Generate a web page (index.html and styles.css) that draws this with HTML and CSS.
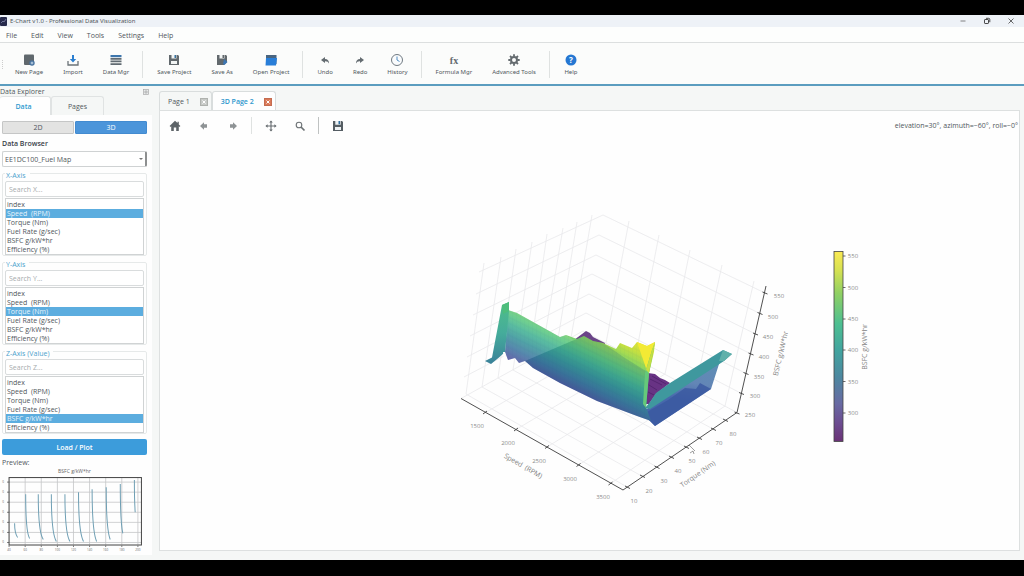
FILE: index.html
```html
<!DOCTYPE html>
<html lang="en">
<head>
<meta charset="utf-8">
<title>E-Chart v1.0 - Professional Data Visualization</title>
<link rel="stylesheet" href="styles.css">
</head>
<body>
<div class="window">
  <header class="titlebar">
    <svg class="app-icon" viewBox="0 0 8 9"><rect width="7" height="9" rx="1" fill="#262a4c"/><path d="M1 6l2-2 1 1 2-3" fill="none" stroke="#8d92b8" stroke-width=".7"/></svg>
    <h1 class="title">E-Chart v1.0 - Professional Data Visualization</h1>
    <div class="window-controls">
      <button aria-label="Minimize"><svg viewBox="0 0 8 8"><path d="M1.5 4h5" stroke="#666" stroke-width=".8"/></svg></button>
      <button aria-label="Restore"><svg viewBox="0 0 8 8" fill="none" stroke="#333" stroke-width=".9"><rect x="1.5" y="2.5" width="4" height="4" rx=".6"/><path d="M3 1.3h2.6q1.2 0 1.2 1.2v2.7"/></svg></button>
      <button aria-label="Close"><svg viewBox="0 0 8 8"><path d="M1.5 1.5l5 5m0-5l-5 5" stroke="#444" stroke-width=".8"/></svg></button>
    </div>
  </header>
  <nav class="menubar">
    <button>File</button><button>Edit</button><button>View</button><button>Tools</button><button>Settings</button><button>Help</button>
  </nav>
  <div class="toolbar">
    <span class="grip"></span>
    <button class="tool"><svg viewBox="0 0 14 14"><path d="M3 1.5h8q1 0 1 1V8l-4 4H3q-1 0-1-1V2.500q0-1 1-1z" fill="#60686d"/><circle cx="10" cy="10" r="2.700" fill="#46729f"/><path d="M8.600 10h2.800M10 8.600v2.800" stroke="#dce8f3" stroke-width=".8"/></svg>New Page</button>
    <button class="tool"><svg viewBox="0 0 14 14"><path d="M2 8v4h10V8" fill="none" stroke="#6b7378" stroke-width="1.300"/><path d="M6 2h2v4h2.200L7 9.500 3.800 6H6z" fill="#2b7fd0"/></svg>Import</button>
    <button class="tool"><svg viewBox="0 0 14 14"><path d="M1.500 2h11v2.200h-11z" fill="#3d76ac"/><path d="M1.500 5h11v1.700h-11zm0 2.600h11v1.700h-11zm0 2.600h11v1.700h-11z" fill="#616b72"/></svg>Data Mgr</button>
    <span class="divider"></span>
    <button class="tool"><svg viewBox="0 0 14 14"><path d="M2 2h9l1 1v9H2z" fill="#62696d"/><path d="M4.500 2h5v3.500h-5zM4 8h6v3H4z" fill="#f2f5f4"/><path d="M7.500 2h1.500v3H7.500z" fill="#37719d"/></svg>Save Project</button>
    <button class="tool"><svg viewBox="0 0 14 14"><path d="M2 2h9l1 1v6l-3 3H2z" fill="#62696d"/><path d="M4.500 2h5v3.500h-5z" fill="#f2f5f4"/><path d="M7.500 2H9v3H7.500z" fill="#62696d"/><path d="M9 6l3.500 3L9.500 12 8 11z" fill="#3c76b2"/></svg>Save As</button>
    <button class="tool"><svg viewBox="0 0 14 14"><path d="M2 2h10.500v9H2z" fill="#496580"/><path d="M2 5h11l-1 7.500H1.500z" fill="#287ed8"/></svg>Open Project</button>
    <span class="divider"></span>
    <button class="tool"><svg viewBox="0 0 14 14"><path d="M3 7l4-3v2q4 0 4 4.500Q10 8 7 8.200V10z" fill="#646c71"/></svg>Undo</button>
    <button class="tool"><svg viewBox="0 0 14 14"><path d="M11 7L7 4v2q-4 0-4 4.500Q4 8 7 8.200V10z" fill="#646c71"/></svg>Redo</button>
    <button class="tool"><svg viewBox="0 0 14 14"><circle cx="7" cy="7" r="5.500" fill="#fafcfd" stroke="#707a82"/><path d="M7 3.500V7l2.500 1.500" fill="none" stroke="#3e82bd" stroke-width=".9"/></svg>History</button>
    <span class="divider"></span>
    <button class="tool"><svg viewBox="0 0 14 14"><text x="7" y="10.500" class="fx">fx</text></svg>Formula Mgr</button>
    <button class="tool"><svg viewBox="0 0 14 14"><circle cx="7" cy="7" r="3" fill="none" stroke="#646b6f" stroke-width="2"/><path d="M7 1.300v2M7 10.700v2M1.300 7h2M10.700 7h2M3 3l1.400 1.400M9.600 9.600L11 11M3 11l1.400-1.400M9.600 4.400L11 3" stroke="#646b6f" stroke-width="1.800"/></svg>Advanced Tools</button>
    <span class="divider"></span>
    <button class="tool"><svg viewBox="0 0 14 14"><circle cx="7" cy="7" r="5.500" fill="#2577d2"/><text x="7" y="10" class="help-mark">?</text></svg>Help</button>
  </div>

  <div class="workspace">
    <aside class="dock">
      <div class="dock-title"><span>Data Explorer</span><button aria-label="Float panel"><svg viewBox="0 0 6 6"><rect x=".5" y=".5" width="5" height="5" fill="#e8eaea" stroke="#aaa" stroke-width=".7"/><path d="M2 4V2h2v2z" fill="none" stroke="#888" stroke-width=".5"/></svg></button></div>
      <div class="dock-tabs" role="tablist"><button role="tab" class="active" aria-selected="true">Data</button><button role="tab">Pages</button></div>
      <div class="dock-body">
        <div class="mode"><button>2D</button><button class="on">3D</button></div>
        <label class="heading" for="dataset">Data Browser</label>
        <div class="combo"><select id="dataset"><option>EE1DC100_Fuel Map</option></select></div>
        <fieldset>
          <legend>X-Axis</legend>
          <input type="text" aria-label="Search X" placeholder="Search X...">
          <ul role="listbox" aria-label="X-Axis"><li role="option">index</li><li role="option" class="selected" aria-selected="true">Speed&nbsp; (RPM)</li><li role="option">Torque (Nm)</li><li role="option">Fuel Rate (g/sec)</li><li role="option">BSFC g/kW*hr</li><li role="option">Efficiency (%)</li></ul>
        </fieldset>
        <fieldset>
          <legend>Y-Axis</legend>
          <input type="text" aria-label="Search Y" placeholder="Search Y...">
          <ul role="listbox" aria-label="Y-Axis"><li role="option">index</li><li role="option">Speed&nbsp; (RPM)</li><li role="option" class="selected" aria-selected="true">Torque (Nm)</li><li role="option">Fuel Rate (g/sec)</li><li role="option">BSFC g/kW*hr</li><li role="option">Efficiency (%)</li></ul>
        </fieldset>
        <fieldset>
          <legend>Z-Axis (Value)</legend>
          <input type="text" aria-label="Search Z" placeholder="Search Z...">
          <ul role="listbox" aria-label="Z-Axis"><li role="option">index</li><li role="option">Speed&nbsp; (RPM)</li><li role="option">Torque (Nm)</li><li role="option">Fuel Rate (g/sec)</li><li role="option" class="selected" aria-selected="true">BSFC g/kW*hr</li><li role="option">Efficiency (%)</li></ul>
        </fieldset>
        <button class="load">Load / Plot</button>
        <p class="preview-label">Preview:</p>
        <svg class="preview" viewBox="0 467 151 86">
          <text x="74" y="473" class="mini-title">BSFC g/kW*hr</text>
          <path d="M25 477v67M41 477v67M57 477v67M73 477v67M89 477v67M105 477v67M121 477v67M137 477v67M9 482h132M9 492h132M9 502h132M9 512h132M9 522h132M9 532h132M9 542h132" stroke="#c4c6c7" stroke-width=".8"/>
          <path d="M14.500 523q0 10 3 14M25.500 494q0 38 4 44M38 494q0 38 5 45M51 494q0 39 5 47M64.500 494q0 39 5 47M78 492q0 40 5 49M91.500 489q0 42 4.500 52M105.500 487q0 42 4 52M119.500 484q0 38 2.500 49M133.500 480q0 20 .8 32" fill="none" stroke="#6f9fb4"/>
          <rect x="9" y="477.500" width="131.500" height="67" fill="none" stroke="#444" stroke-width="1"/>
          <path d="M9 545v1.500M25 545v1.500M41 545v1.500M57 545v1.500M73 545v1.500M89 545v1.500M105 545v1.500M121 545v1.500M137 545v1.500M9 482H7M9 492H7M9 502H7M9 512H7M9 522H7M9 532H7M9 542H7" stroke="#444" stroke-width=".7"/>
          <g class="mini"><text x="9" y="550">40</text><text x="25" y="550">60</text><text x="41" y="550">80</text><text x="57" y="550">100</text><text x="73" y="550">120</text><text x="89" y="550">140</text><text x="105" y="550">160</text><text x="121" y="550">180</text><text x="137" y="550">200</text>
          <text x="3" y="483">0</text><text x="3" y="493">0</text><text x="3" y="503">0</text><text x="3" y="513">0</text><text x="3" y="523">0</text><text x="3" y="533">0</text><text x="3" y="543">0</text></g>
        </svg>
      </div>
    </aside>

    <main class="pages">
      <div class="page-tabs" role="tablist">
        <div class="page-tab"><button role="tab">Page 1</button><button class="close" aria-label="Close Page 1"><svg viewBox="0 0 8 8"><rect x=".5" y=".5" width="7" height="7" fill="#c6c9c6" stroke="#afb2ae"/><path d="M2.500 2.500l3 3m0-3l-3 3" stroke="#fff"/></svg></button></div>
        <div class="page-tab active"><button role="tab" aria-selected="true">3D Page 2</button><button class="close" aria-label="Close 3D Page 2"><svg viewBox="0 0 8 8"><rect x=".5" y=".5" width="7" height="7" fill="#d97958" stroke="#c56c50"/><path d="M2.500 2.500l3 3m0-3l-3 3" stroke="#fff"/></svg></button></div>
      </div>
      <section class="page">
        <div class="plot-tools">
          <button aria-label="Home"><svg viewBox="0 0 12 12"><path d="M6 .8L.6 6l.9.9.7-.6V11h2.600V7.500h2.400V11h2.600V6.300l.7.6.9-.9-1.600-1.600V1.700H8.500v1.400z" fill="#5e6468"/></svg></button>
          <button aria-label="Back"><svg viewBox="0 0 12 12"><path d="M2 6l4-3.700v2h3v3.400H6v2z" fill="#8e9395"/></svg></button>
          <button aria-label="Forward"><svg viewBox="0 0 12 12"><path d="M10 6L6 2.300v2H3v3.400h3v2z" fill="#8e9395"/></svg></button>
          <span class="divider"></span>
          <button aria-label="Pan"><svg viewBox="0 0 12 12"><path d="M6 1.500v9M1.500 6h9" stroke="#666c70" stroke-width="1.100"/><path d="M6 .4L4.200 2.600h3.600zM6 11.600L4.200 9.400h3.600zM.4 6l2.200-1.800v3.600zM11.600 6L9.400 4.200v3.600z" fill="#666c70"/></svg></button>
          <button aria-label="Zoom"><svg viewBox="0 0 12 12" fill="none" stroke="#6d7275"><circle cx="5" cy="5" r="2.800" stroke-width="1.100"/><path d="M7 7l3.500 3.500" stroke-width="1.700"/></svg></button>
          <span class="divider dark"></span>
          <button aria-label="Save figure"><svg viewBox="0 0 12 12"><path d="M1 1h9l1 1v9H1z" fill="#555d63"/><path d="M3.300 1h5.400v3.800H3.300zM3 7h6v3H3z" fill="#eef2f4"/><path d="M6.500 1H8v3.200H6.500z" fill="#2f6f9f"/></svg></button>
          <output>elevation=30°, azimuth=−60°, roll=−0°</output>
        </div>
        <svg class="plot" viewBox="160 140 859 410" role="img" aria-label="3D surface of BSFC over speed and torque">
          <defs>
            <linearGradient id="bar" x1="0" y1="0" x2="0" y2="1"><stop offset="0" stop-color="#fbea53"/><stop offset=".1" stop-color="#d5e152"/><stop offset=".22" stop-color="#90d063"/><stop offset=".38" stop-color="#4dbf91"/><stop offset=".52" stop-color="#42a49f"/><stop offset=".66" stop-color="#4d88a0"/><stop offset=".8" stop-color="#686aa3"/><stop offset=".9" stop-color="#6c4d91"/><stop offset="1" stop-color="#6a3276"/></linearGradient>
            <linearGradient id="curtain" gradientUnits="userSpaceOnUse" x1="509" y1="272" x2="474.600" y2="340.800"><stop offset="0" stop-color="#f2e73a"/><stop offset=".18" stop-color="#c6e040"/><stop offset=".34" stop-color="#8bd660"/><stop offset=".48" stop-color="#5ecb80"/><stop offset=".6" stop-color="#45b594"/><stop offset=".72" stop-color="#3b999a"/><stop offset=".86" stop-color="#4179a2"/><stop offset="1" stop-color="#5156a0"/></linearGradient>
            <linearGradient id="leftwall" x1="0" y1="0" x2="0" y2="1"><stop offset="0" stop-color="#4fbe88"/><stop offset=".5" stop-color="#45ac9b"/><stop offset="1" stop-color="#3a8199"/></linearGradient>
            <linearGradient id="basin" gradientUnits="userSpaceOnUse" x1="720" y1="360" x2="712" y2="405"><stop offset="0" stop-color="#5d8fb4"/><stop offset=".6" stop-color="#6386b6"/><stop offset="1" stop-color="#4768ac"/></linearGradient>
            <pattern id="mesh" width="4" height="6" patternUnits="userSpaceOnUse" patternTransform="skewY(26)"><path d="M0 0v6M0 3h4" stroke="#174c70" stroke-width=".5" opacity=".1"/></pattern>
          </defs>
          <g class="grid">
            <path d="M479 272L603 215 765 293M476 294L599 235 760 313.500M473 315L596 255 755.500 334M470 336L592 274 751 354M467 357L589 294 746 373.500M464 377L586 313 741.500 393.500M461 398.500L583 331 737 412.500"/>
            <path d="M484 263L466 394 627 487M501 257L482 387 642.500 476.500M516 249L498 378 657 467M532 242L513 370 671.500 457.500M547 234L529 361 686.500 447.500M563 228L542 353 699 438.500M577 222L557 345 713 429M592 215L571 338 725.500 420.500"/>
            <path d="M629 221L606 343 485.500 412.500M659 235L635 359 516 429.500M690 250L665 374 547 447M722 265L695 390 578.500 465M754 281L725 406 610.500 483.500"/>
          </g>
          <path d="M574 340L586 331 590 333 593 337 605 343 603 352z" fill="#6a4487"/>
          <path d="M648 373L655 374 660 378 665 380 670 383 656 394 649 404 645 404z" fill="#683384"/>
          <path d="M650 379l12 6M649 385l8 5M648 392l6 3M652 376l14 8" stroke="#4c2068" stroke-width=".7"/>
          <path d="M720 361L711 389 655 426 649 420 645 410 670 395z" fill="url(#basin)"/>
          <path d="M711 389L655 426 649 420 647 412 668 400 685 388 696 389 700 383z" fill="#3a58a0" opacity=".8"/>
          <path d="M723 350L732 354 724 361 650 409 645 408 650 402 656 393 670 383z" fill="#3f989e"/>
          <path d="M723 350L732 354 724 361 719 361z" fill="#5fb0aa"/>
          <path d="M508 310L517 313 560 337 566 335 577 339 584 336 593 341 603 343 616 349 620 343 632 348 637 342 647 346 655 342 654 352 649 373 646 407 651 421 637 416 597 401 560 383 533 368 525 361 519 363 515 358 508 360 505 352z" fill="url(#curtain)"/>
          <path d="M508 310L517 313 560 337 566 335 574 340 523 362 519 363 515 358 508 360 505 352z" fill="#dfeaf4" opacity=".14"/>
          <path d="M584 336L593 341 603 343 625 358 649 373 646 407 651 421 637 416 597 401 560 383 533 368 525 361 572 341z" fill="#175878" opacity=".2"/>
          <path d="M508 310L517 313 560 337 566 335 577 339 584 336 593 341 603 343 616 349 620 343 632 348 637 342 647 346 655 342 654 352 649 373 646 407 651 421 637 416 597 401 560 383 533 368 525 361 519 363 515 358 508 360 505 352z" fill="url(#mesh)"/>
          <path d="M637 342L647 346 655 342 647 371z" fill="#f3ea34"/>
          <path d="M655 342L652 350 645 373 643 404 646 408 649 373z" fill="#65c97a"/>
          <path d="M655 342L652 350 646 370 649 373z" fill="#c6de40"/>
          <path d="M502 305L509 302 509 311 505 352 499 357.500 491 364 485 361 492 357.500z" fill="url(#leftwall)"/>
          <path d="M502 305L509 302 509 311 503 314z" fill="#4dbd7c"/>
          <path d="M503 352l2 0 1 7-2 0z" fill="#fefefe"/>
          <g class="axes">
            <path d="M461 398.500L623 490 737 412.500 766 286"/>
            <path d="M487 411l-4 3M518 428l-4 3M549 445.500l-4 3M580.500 463.500l-4 3M612.500 482l-4 3M625 486l5 2.500M640 475l5 2.500M654.500 466l5 2.500M669 456l5 2.500M684 446l5 2.500M697 437l5 2.500M711 428l5 2.500M723 419l5 2.500M762.500 292l5 2M757.500 312.500l5 2M753 333l5 2M748.500 353l5 2M743.500 372.500l5 2M739 392.500l5 2M734.500 412l5 2"/>
            <path d="M689 445l6 6M690 453l3-2 1 3" stroke-width=".5"/>
          </g>
          <g class="ticks">
            <text x="477" y="428">1500</text><text x="508" y="445">2000</text><text x="539" y="463">2500</text><text x="570" y="481">3000</text><text x="603" y="499">3500</text>
            <text x="634" y="503">10</text><text x="649" y="493">20</text><text x="664" y="483">30</text><text x="678" y="473">40</text><text x="692" y="463">50</text><text x="706" y="454">60</text><text x="719" y="445">70</text><text x="733" y="436">80</text>
            <text x="779" y="298">550</text><text x="773" y="319">500</text><text x="768" y="339">450</text><text x="764" y="359">400</text><text x="759" y="379">350</text><text x="755" y="398">300</text><text x="750" y="417">250</text>
            <text x="853" y="258">550</text><text x="853" y="290">500</text><text x="853" y="321">450</text><text x="853" y="352">400</text><text x="853" y="384">350</text><text x="853" y="415">300</text>
          </g>
          <g class="labels">
            <text transform="translate(522 468) rotate(30)">Speed&#160; (RPM)</text>
            <text transform="translate(699 476) rotate(-35)">Torque (Nm)</text>
            <text transform="translate(783 354) rotate(-77)">BSFC g/kW*hr</text>
            <text transform="translate(867 347) rotate(-90)">BSFC g/kW*hr</text>
          </g>
          <rect x="834" y="251.500" width="9" height="190" fill="url(#bar)" stroke="#444" stroke-width=".8"/>
          <path d="M843 256h2.500M843 287.500h2.500M843 319h2.500M843 350h2.500M843 381.500h2.500M843 413h2.500" stroke="#444" stroke-width=".8"/>
        </svg>
      </section>
    </main>
  </div>
</div>
</body>
</html>
```

FILE: styles.css
```css
* { box-sizing: border-box; }
body {
  margin: 0;
  height: 100vh;
  padding: 15px 0 16px;
  background: #000;
  color: #50575c;
  font: 7px/9px "Open Sans", "Noto Sans", sans-serif;
}
button, input, select { font: inherit; color: inherit; }
button { border: 0; padding: 0; background: none; }
svg { display: block; }
.window { height: 100%; display: flex; flex-direction: column; background: #f5f7f6; overflow: hidden; }

.titlebar { display: flex; align-items: center; height: 12px; flex: none; background: #eef2f7; }
.app-icon { width: 8px; height: 9px; margin-right: 2px; }
.title { margin: 0; font: 6px/9px "Noto Sans", sans-serif; }
.window-controls { display: flex; gap: 16px; margin-left: auto; padding-right: 9px; }
.window-controls svg { width: 8px; height: 8px; }

.menubar { display: flex; gap: 14px; align-items: center; height: 16px; flex: none; padding: 2px 6px 0; background: #fdfefd; border-bottom: 1px solid #dcdfdf; }

.toolbar { display: flex; align-items: center; height: 43px; flex: none; padding-top: 2px; background: #fbfcfb; border-bottom: 2px solid #5b9dbf; }
.grip { width: 2px; height: 9px; margin: 0 1px 0 2px; border-left: 1px dotted #ccc; }
.tool { display: flex; flex-direction: column; align-items: center; gap: 1px; padding: 0 10px; white-space: nowrap; font: 6px/9px "Noto Sans", sans-serif; }
.tool svg { width: 14px; height: 14px; }
.divider { width: 1px; height: 27px; margin: 0 4px 0 3px; background: #dfe2e1; }
.fx { font: bold 10px "Liberation Serif", serif; fill: #646b6f; text-anchor: middle; }
.help-mark { font: bold 8px "Noto Sans", sans-serif; fill: #fff; text-anchor: middle; }

.workspace { display: flex; flex: 1; min-height: 0; }
.dock { width: 152px; flex: none; display: flex; flex-direction: column; padding-bottom: 5px; }
.dock-title { display: flex; justify-content: space-between; align-items: center; height: 10px; flex: none; padding: 1px 3px 0 0; }
.dock-title svg { width: 6px; height: 6px; }
.dock-tabs { display: flex; height: 19px; flex: none; }
.dock-tabs button { width: 53px; padding-top: 1px; border: 1px solid #e0e3e3; border-bottom: 0; border-radius: 3px 3px 0 0; }
.dock-tabs .active { width: 51px; padding-right: 3px; border-left: 0; background: #fefefe; color: #319bd0; font-weight: 600; }
.dock-body { flex: 1; display: flex; flex-direction: column; padding: 6px 5px 0 2px; background: #fefefe; }
.mode { display: grid; grid-template-columns: 1fr 1fr; gap: 1px; }
.mode button { height: 13px; border: 1px solid #c5c6c6; border-radius: 1px; background: #e3e3e2; }
.mode .on { background: #4c95da; border-color: #438bd0; color: #fff; }
.heading { padding: 5px 0 3px; font-weight: 600; color: #394047; }
.combo { position: relative; }
.combo select { display: block; width: 100%; height: 16px; padding: 0 2px; appearance: none; background: #fff; border: 1px solid #cfd2d3; border-right: 2px solid #8d8f90; border-radius: 2px; }
.combo::after { content: ""; position: absolute; right: 4px; top: 7px; border: 2px solid transparent; border-top-color: #777; }
fieldset { min-width: 0; margin: 0; padding: 1px 2px 0; border: 1px solid #e6e9e9; border-radius: 2px; }
legend { padding: 4px 4px 0 1px; color: #4da2cd; }
fieldset input { display: block; width: 100%; height: 16px; padding: 0 3px; border: 1px solid #d9dcdd; border-radius: 2px; background: #fff; }
fieldset input::placeholder { color: #a6abad; }
fieldset ul { margin: 1px 0 0; padding: 1px 0 0; list-style: none; border: 1px solid #d0d3d4; background: #fff; }
fieldset li { padding-left: 1px; }
.selected { background: #5caddf; color: #e7f4fc; }
.load { height: 16px; flex: none; margin-top: 5px; border-radius: 2px; background: #3c9cdb; color: #fff; font-weight: 600; }
.preview-label { margin: 3px 0 0; }
.preview { margin: 0 -5px 0 -2px; }
.mini { font-size: 3px; fill: #666; text-anchor: middle; }
.mini-title { font-size: 5px; fill: #666; text-anchor: middle; }

.pages { flex: 1; min-width: 0; display: flex; flex-direction: column; padding: 5px 4px 9px 7px; }
.page-tabs { display: flex; height: 19px; flex: none; }
.page-tab { display: flex; align-items: center; gap: 10px; padding: 1px 3px 0 8px; border: 1px solid #d9dddd; border-bottom: 0; border-radius: 3px 3px 0 0; }
.page-tab.active { background: #fefefe; color: #2f98cd; font-weight: 600; }
.close svg { width: 8px; height: 8px; }
.page { flex: 1; min-height: 0; display: flex; flex-direction: column; background: #fefefe; border: 1px solid #dde0e0; }
.plot-tools { display: flex; align-items: center; height: 29px; flex: none; padding-left: 9px; }
.plot-tools button { margin-right: 17px; }
.plot-tools svg { width: 12px; height: 12px; }
.plot-tools .divider { height: 17px; margin: 0 13px 0 -5px; }
.plot-tools .dark { background: #bfc2c2; }
.plot-tools output { margin-left: auto; padding-right: 1px; }
.plot { flex: 1; width: 100%; min-height: 0; }
.grid { fill: none; stroke: #e9e9eb; stroke-width: .8; }
.axes { fill: none; stroke: #3c3c3c; stroke-width: .9; }
.ticks { font-size: 6px; fill: #8b8b8b; text-anchor: middle; }
.labels { font-size: 7px; fill: #858585; text-anchor: middle; }
```
